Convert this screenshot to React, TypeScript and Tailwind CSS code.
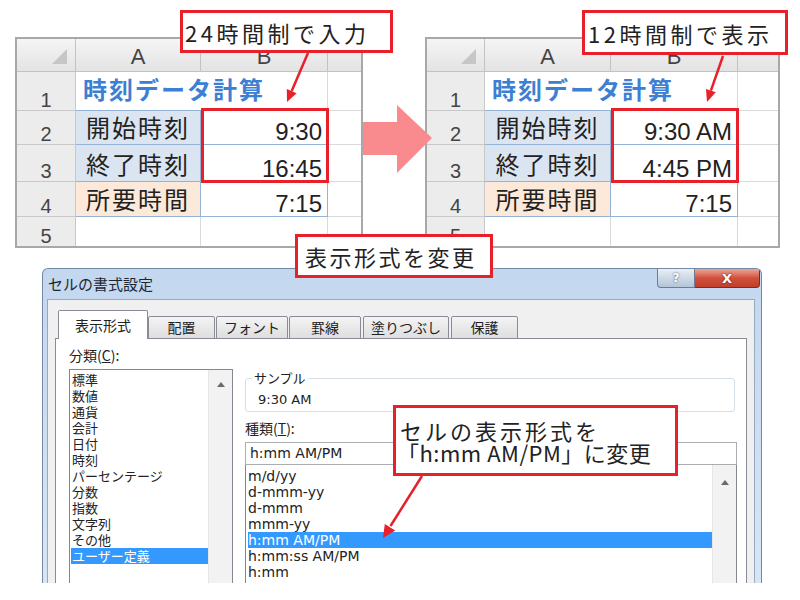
import React from "react";

const SHEET_FONT = "font-['Liberation_Sans','Noto_Sans_CJK_JP',sans-serif]";
const JP = "font-['Noto_Sans_CJK_JP',sans-serif]";
const UI = "font-['DejaVu_Sans','Noto_Sans_CJK_JP',sans-serif]";

type SheetProps = {
  width: string;
  cols: string;
  b: [string, string, string];
};

function Sheet({ width, cols, b }: SheetProps) {
  const hdr =
    "bg-gradient-to-b from-[#f5f5f5] to-[#e3e3e3] border-r border-b border-[#c3c3c3]";
  const hdrText =
    "flex items-end justify-center pb-[3px] text-[22px] leading-[22px] text-[#444]";
  const rn =
    "bg-[#ececec] border-r border-b border-[#c8c8c8] flex items-end justify-center text-[20px] leading-[20px] text-[#444]";
  const grid = "border-r border-b border-[#dadada]";
  const blueA =
    "bg-[#dbe5f1] border-r border-b border-[#95b3d7] flex items-end justify-center pb-[3px] text-[24px] leading-[24px] tracking-[2px] text-[#222]";
  const bVal =
    "border-r border-b border-[#95b3d7] flex items-end justify-end pr-[5px] text-[24px] leading-[24px] text-[#222]";
  return (
    <div className={`relative shrink-0 border-2 border-[#a8a8a8] bg-white ${width}`}>
      <div className={`grid ${cols} grid-rows-[33px_39px_34px_37px_35px_29px] ${SHEET_FONT}`}>
        <div className={`${hdr} relative`}>
          <svg className="absolute right-[8px] bottom-[7px]" width="15" height="15" viewBox="0 0 15 15">
            <polygon points="15,0 15,15 0,15" fill="#c6c6c6" />
          </svg>
        </div>
        <div className={`${hdr} ${hdrText}`}>A</div>
        <div className={`${hdr} ${hdrText}`}>B</div>
        <div className={`${hdr} border-r-0`} />

        <div className={rn}>1</div>
        <div className="border-b border-[#95b3d7] flex items-center pl-[7px] whitespace-nowrap text-[24px] leading-[24px] font-bold tracking-[2px] text-[#3d7fd3]">
          時刻データ計算
        </div>
        <div className="border-r border-b border-r-[#dadada] border-b-[#95b3d7]" />
        <div className="border-b border-[#dadada]" />

        <div className={rn}>2</div>
        <div className={blueA}>開始時刻</div>
        <div className={bVal}>{b[0]}</div>
        <div className="border-b border-[#dadada]" />

        <div className={rn}>3</div>
        <div className={blueA}>終了時刻</div>
        <div className={bVal}>{b[1]}</div>
        <div className="border-b border-[#dadada]" />

        <div className={rn}>4</div>
        <div className="bg-[#fde9d9] border-r border-b border-[#95b3d7] flex items-end justify-center pb-[3px] text-[24px] leading-[24px] tracking-[2px] text-[#222]">
          所要時間
        </div>
        <div className={bVal}>{b[2]}</div>
        <div className="border-b border-[#dadada]" />

        <div className={`${rn} border-b-0`}>5</div>
        <div className={`${grid} border-b-0`} />
        <div className={`${grid} border-b-0`} />
        <div />
      </div>
      <div className="absolute left-[184px] top-[69px] w-[128px] h-[75px] border-[3px] border-[#e8202a]" />
    </div>
  );
}

function Tab({ label, w, sel, ml }: { label: string; w: string; sel?: boolean; ml: string }) {
  if (sel) {
    return (
      <div
        className={`${w} ${ml} h-[29px] border border-b-0 border-[#898c95] bg-white flex items-center justify-center text-[14px] text-[#222] rounded-t-[2px]`}
      >
        {label}
      </div>
    );
  }
  return (
    <div
      className={`${w} ${ml} h-[23px] border border-[#898c95] bg-gradient-to-b from-[#f4f4f4] to-[#dedede] flex items-center justify-center text-[14px] text-[#222] rounded-t-[2px]`}
    >
      {label}
    </div>
  );
}

function UpArrow() {
  return (
    <svg width="8" height="5" viewBox="0 0 8 5">
      <polygon points="4,0 8,5 0,5" fill="#6a6a6a" />
    </svg>
  );
}

function Dialog() {
  const cats = [
    "標準",
    "数値",
    "通貨",
    "会計",
    "日付",
    "時刻",
    "パーセンテージ",
    "分数",
    "指数",
    "文字列",
    "その他",
  ];
  const types = ["m/d/yy", "d-mmm-yy", "d-mmm", "mmm-yy"];
  return (
    <div className="ml-[42px] mt-[20px] w-[720px] h-[315px] relative flex flex-col border border-b-0 border-[#7489a6] rounded-t-[6px] overflow-hidden bg-gradient-to-b from-[#c3d7ef] to-[#d8e5f4]">
      <div className={`h-[30px] shrink-0 flex items-center pl-[5px] text-[15px] text-[#1c2733] ${JP}`}>
        セルの書式設定
      </div>
      <div className="absolute top-0 right-[1px] flex">
        <div className="w-[38px] h-[19px] rounded-bl-[4px] border border-t-0 border-[#6c7d94] bg-gradient-to-b from-[#e9eff6] to-[#b3c4d8] flex items-center justify-center text-[12px] leading-none font-bold text-white [text-shadow:0_0_2px_#33445a] font-['DejaVu_Sans',sans-serif]">
          ?
        </div>
        <div className="w-[65px] h-[19px] rounded-br-[4px] border border-t-0 border-l-0 border-[#7d2a1f] bg-gradient-to-b from-[#eaa697] via-[#d0503b] to-[#c23e2a] flex items-center justify-center text-[13px] leading-none font-bold text-white [text-shadow:0_0_2px_#5a1a10] font-['DejaVu_Sans',sans-serif]">
          X
        </div>
      </div>
      <div className="flex-1 min-h-0 ml-[4px] mr-[6px] border border-b-0 border-[#95a9c2] bg-[#f0f0f0] pt-[10px] pl-[7px] pr-[7px] flex flex-col">
        <div className={`relative z-10 -mb-[1px] flex items-end pl-[3px] ${JP}`}>
          <Tab label="表示形式" w="w-[90px]" ml="ml-0" sel />
          <Tab label="配置" w="w-[67px]" ml="ml-0" />
          <Tab label="フォント" w="w-[72px]" ml="ml-[1px]" />
          <Tab label="罫線" w="w-[72px]" ml="ml-[1px]" />
          <Tab label="塗りつぶし" w="w-[86px]" ml="ml-[2px]" />
          <Tab label="保護" w="w-[67px]" ml="ml-[2px]" />
        </div>
        <div className="flex-1 min-h-0 border border-b-0 border-[#898c95] bg-white pt-[8px] pl-[13px] flex gap-[12px]">
          <div className="w-[164px] flex flex-col">
            <div className={`h-[22px] leading-[16px] text-[14px] text-[#222] ${JP}`}>
              分類(<span className="underline">C</span>):
            </div>
            <div className="flex-1 min-h-0 border border-b-0 border-[#828790] bg-white flex">
              <div className={`flex-1 pt-[2px] ${JP} text-[13px] text-[#222]`}>
                {cats.map((c) => (
                  <div key={c} className="h-[16px] leading-[16px] pl-[2px] whitespace-nowrap">
                    {c}
                  </div>
                ))}
                <div className="ml-[1px] h-[16px] leading-[16px] pl-[1px] bg-[#3399ff] text-white whitespace-nowrap">
                  ユーザー定義
                </div>
              </div>
              <div className="w-[24px] bg-[#f2f2f2] border-l border-[#e6e6e6] flex justify-center pt-[12px]">
                <UpArrow />
              </div>
            </div>
          </div>
          <div className={`w-[492px] flex flex-col ${UI}`}>
            <div className="relative mt-[31px] mr-[2px] h-[34px] border border-[#d5dfe5] rounded-[3px] pt-[13px] pl-[12px] text-[13px] leading-[16px] text-[#222]">
              <span className={`absolute -top-[9px] left-[6px] bg-white px-[2px] text-[13px] leading-[16px] text-[#222] ${JP}`}>
                サンプル
              </span>
              9:30 AM
            </div>
            <div className={`mt-[8px] h-[16px] leading-[16px] text-[14px] text-[#222] ${JP}`}>
              種類(<span className="underline">T</span>):
            </div>
            <div className="mt-[6px] h-[23px] border border-[#abadb3] bg-white flex items-center pl-[4px] text-[14px] text-[#222]">
              h:mm AM/PM
            </div>
            <div className="flex-1 min-h-0 border border-t-0 border-b-0 border-[#828790] bg-white flex">
              <div className="flex-1 pt-[3px] text-[14px] text-[#222]">
                {types.map((t) => (
                  <div key={t} className="h-[16px] leading-[16px] pl-[2px] whitespace-nowrap">
                    {t}
                  </div>
                ))}
                <div className="ml-[2px] h-[16px] leading-[16px] bg-[#3399ff] text-white whitespace-nowrap">
                  h:mm AM/PM
                </div>
                <div className="h-[16px] leading-[16px] pl-[2px] whitespace-nowrap">h:mm:ss AM/PM</div>
                <div className="h-[16px] leading-[16px] pl-[2px] whitespace-nowrap">h:mm</div>
              </div>
              <div className="w-[24px] bg-[#f2f2f2] border-l border-[#e6e6e6] flex justify-center pt-[15px]">
                <UpArrow />
              </div>
            </div>
          </div>
        </div>
      </div>
    </div>
  );
}

export default function App() {
  const callout =
    "absolute bg-white border-[3px] border-[#e8202a] text-[22px] leading-none text-[#222] whitespace-nowrap " +
    JP;
  return (
    <div className="relative w-[800px] h-[600px] bg-white overflow-hidden">
      <div className="flex pt-[37px] pl-[15px]">
        <Sheet width="w-[348px]" cols="grid-cols-[59px_125px_127px_33px]" b={["9:30", "16:45", "7:15"]} />
        <div className="w-[62px] shrink-0" />
        <Sheet width="w-[355px]" cols="grid-cols-[58px_126px_127px_40px]" b={["9:30 AM", "4:45 PM", "7:15"]} />
      </div>
      <Dialog />

      <svg className="absolute left-0 top-0 pointer-events-none" width="800" height="600" viewBox="0 0 800 600">
        <polygon points="363,122 397,122 397,105 432,138 397,173 397,155 363,155" fill="#f98b8e" />
        <line x1="308" y1="53" x2="291.7" y2="91" stroke="#e8202a" strokeWidth="2.5" />
        <polygon points="287,102 296.6,93.2 286.8,89" fill="#e8202a" />
        <line x1="723" y1="56" x2="710.9" y2="90.7" stroke="#e8202a" strokeWidth="2.5" />
        <polygon points="707,102 715.8,92.3 706,88.9" fill="#e8202a" />
        <line x1="422" y1="476" x2="390.5" y2="526" stroke="#e8202a" strokeWidth="2.5" />
        <polygon points="383,538 395.2,530.6 384.8,524" fill="#e8202a" />
      </svg>

      <div className={`${callout} tracking-[3.5px] left-[180px] top-[10px] w-[213px] h-[43px] flex items-center pl-[2px]`}>
        24時間制で入力
      </div>
      <div className={`${callout} tracking-[3.5px] left-[582px] top-[10px] w-[206px] h-[45px] flex items-center pl-[3px]`}>
        12時間制で表示
      </div>
      <div className={`${callout} tracking-[2.5px] left-[295px] top-[234px] w-[198px] h-[44px] flex items-center pl-[7px]`}>
        表示形式を変更
      </div>
      <div className={`${callout} left-[393px] top-[405px] w-[285px] h-[71px] flex flex-col justify-center pl-[4px] leading-[30px]`}>
        <div className="tracking-[3px]">セルの表示形式を</div>
        <div className="tracking-[0.5px] -ml-[3px]">「h:mm AM/PM」に変更</div>
      </div>
    </div>
  );
}
